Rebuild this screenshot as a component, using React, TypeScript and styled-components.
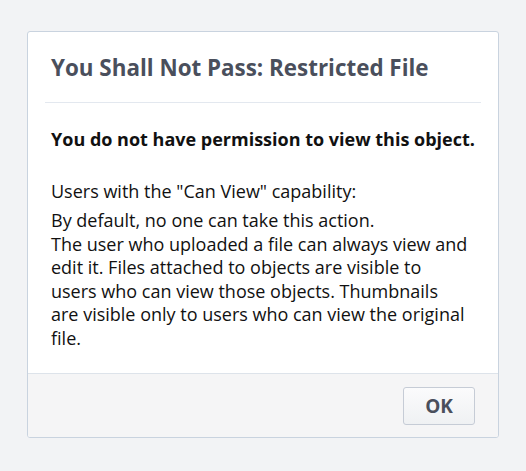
import styled, { createGlobalStyle } from "styled-components";

const GlobalStyle = createGlobalStyle`
    html, body {
        margin: 0;
        padding: 0;
        background: #f2f3f5;
        font-family: "Open Sans", "Noto Sans", sans-serif;
    }
`;

const App = () => {
    return (
        <Page>
            <GlobalStyle />
            <Dialog>
                <Header>
                    <Title>You Shall Not Pass: Restricted File</Title>
                </Header>
                <Body>
                    <Lead>You do not have permission to view this object.</Lead>
                    <Label>Users with the "Can View" capability:</Label>
                    <Policy>
                        By default, no one can take this action.
                        <br />
                        The user who uploaded a file can always view and edit it. Files attached to objects are visible to
                        users who can view those objects. Thumbnails are visible only to users who can view the original
                        file.
                    </Policy>
                </Body>
                <Footer>
                    <Button>OK</Button>
                </Footer>
            </Dialog>
        </Page>
    );
};

export default App;

const Page = styled.div`
    padding: 31px 27px 0 27px;
    height: 471px;
    box-sizing: border-box;
`;

const Dialog = styled.div`
    width: 472px;
    background: #ffffff;
    border: 1px solid #c9d3df;
    border-radius: 3px;
    box-sizing: border-box;
    overflow: hidden;
`;

const Header = styled.div`
    margin: 0 17px;
    padding: 20px 6px 19px 6px;
    border-bottom: 1px solid #e3e8ef;
`;

const Title = styled.div`
    font-size: 22.4px;
    font-weight: 700;
    color: #4a4f5c;
    line-height: 31px;
`;

const Body = styled.div`
    padding: 24px 29px 22px 23px;
    color: #111;
    font-size: 18px;
`;

const Lead = styled.div`
    font-weight: 700;
    line-height: 24px;
    margin-bottom: 28px;
    white-space: nowrap;
`;

const Label = styled.div`
    line-height: 24px;
    margin-bottom: 6px;
`;

const Policy = styled.div`
    line-height: 23.6px;
`;

const Footer = styled.div`
    display: flex;
    justify-content: flex-end;
    padding: 13px 23px 12px 23px;
    background: #f5f5f6;
    border-top: 1px solid #dde3ea;
`;

const Button = styled.button`
    width: 72px;
    height: 38px;
    font-family: inherit;
    font-size: 19px;
    font-weight: 700;
    color: #4a4f5c;
    background: linear-gradient(#fbfbfc, #eff1f3);
    border: 1px solid #c6ccd6;
    border-radius: 3px;
`;
